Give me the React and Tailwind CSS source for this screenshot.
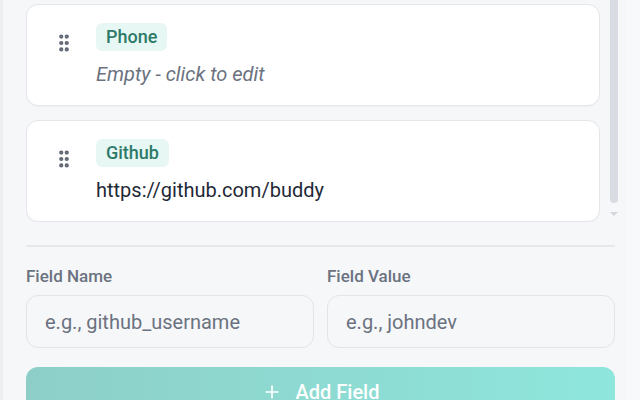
import React from "react";
import { GripVertical, Plus } from "lucide-react";

const fields = [
  { name: "Phone", value: "" },
  { name: "Github", value: "https://github.com/buddy" },
];

const FieldCard = ({ name, value }) => (
  <div className="flex shrink-0 rounded-xl border border-[#e4e6ea] bg-white pl-[26px] pt-[18px] pb-[17px] shadow-[0_1px_2px_rgba(0,0,0,0.03)]">
    <GripVertical className="mt-[9px] h-[22px] w-[22px] shrink-0 text-[#5f6673]" strokeWidth={2.6} />
    <div className="ml-[21px] flex flex-col items-start">
      <span className="rounded-md bg-[#e7f8f4] px-[10px] py-0.5 text-lg leading-6 font-medium text-[#2d7a69]">
        {name}
      </span>
      {value ? (
        <p className="mt-[9px] text-xl leading-7 text-[#1f2937]">{value}</p>
      ) : (
        <p className="mt-[9px] text-xl leading-7 italic text-[#6b7280]">Empty - click to edit</p>
      )}
    </div>
  </div>
);

export default function App() {
  return (
    <div
      className="flex h-[400px] w-[640px] overflow-hidden border-l-[3px] border-[#eceef1] bg-[#f6f7f9]"
      style={{ fontFamily: "Roboto, 'Noto Sans', sans-serif" }}
    >
      <div className="flex w-[592px] shrink-0 flex-col ml-[23px]">
        {/* Field list + scrollbar */}
        <div className="flex h-[222px] shrink-0">
          <div className="flex w-[574px] flex-col gap-[14px] overflow-hidden pt-1">
            {fields.map((f) => (
              <FieldCard key={f.name} {...f} />
            ))}
          </div>
          <div className="ml-[10px] flex w-2 flex-col items-center">
            <div className="h-[203px] w-2 rounded-b-full bg-[#d8dbe1]" />
            <div className="mt-[9px] h-0 w-0 border-x-4 border-t-4 border-x-transparent border-t-[#d3d6dc]" />
          </div>
        </div>

        {/* Add new field */}
        <div className="mr-[3px] mt-[23px] border-t-2 border-[#e6e8ec] pt-[19px]">
          <div className="grid grid-cols-2 gap-[13px]">
            <label className="flex flex-col">
              <span className="text-[17px] leading-5 font-medium text-[#6b7280]">Field Name</span>
              <input
                placeholder="e.g., github_username"
                className="mt-[9px] h-[53px] rounded-xl border border-[#e2e4e8] bg-[#f6f7f9] px-[18px] text-xl text-[#1f2937] placeholder:text-[#6b7280] outline-none"
              />
            </label>
            <label className="flex flex-col">
              <span className="text-[17px] leading-5 font-medium text-[#6b7280]">Field Value</span>
              <input
                placeholder="e.g., johndev"
                className="mt-[9px] h-[53px] rounded-xl border border-[#e2e4e8] bg-[#f6f7f9] px-[18px] text-xl text-[#1f2937] placeholder:text-[#6b7280] outline-none"
              />
            </label>
          </div>
          <button className="mt-[19px] flex h-[50px] w-full items-center justify-center gap-[14px] rounded-xl bg-gradient-to-r from-[#8dcfc8] to-[#8ee6dc] text-xl font-medium text-white">
            <Plus className="h-5 w-5" strokeWidth={2} />
            Add Field
          </button>
        </div>
      </div>
      <div className="ml-[9px] flex-1 bg-[#f8f9fb]" />
    </div>
  );
}
